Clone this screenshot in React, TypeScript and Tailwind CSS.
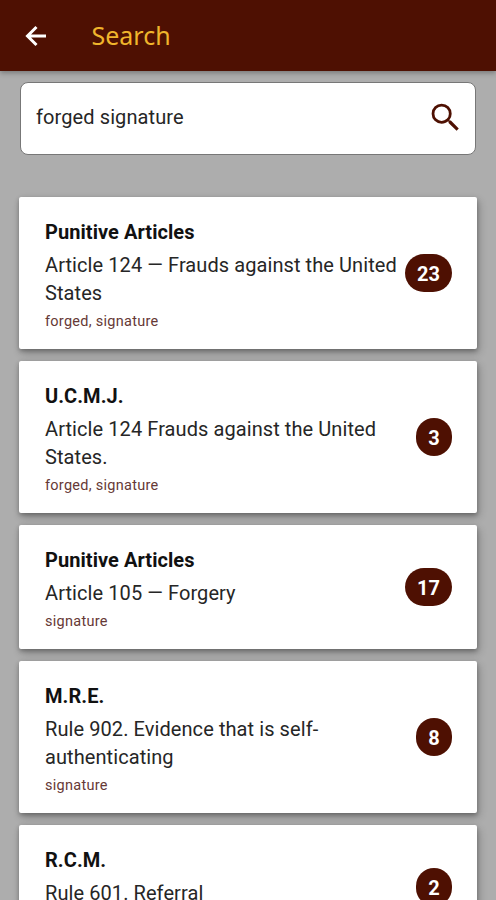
type Item = { cat: string; lines: string[]; terms?: string; count: number };

const items: Item[] = [
  { cat: 'Punitive Articles', lines: ['Article 124 — Frauds against the United', 'States'], terms: 'forged, signature', count: 23 },
  { cat: 'U.C.M.J.', lines: ['Article 124 Frauds against the United', 'States.'], terms: 'forged, signature', count: 3 },
  { cat: 'Punitive Articles', lines: ['Article 105 — Forgery'], terms: 'signature', count: 17 },
  { cat: 'M.R.E.', lines: ['Rule 902. Evidence that is self-', 'authenticating'], terms: 'signature', count: 8 },
  { cat: 'R.C.M.', lines: ['Rule 601. Referral'], count: 2 },
];

function Card({ item }: { item: Item }) {
  return (
    <article className="flex items-center justify-between rounded-[2px] bg-white pt-[21px] pr-[25px] pb-[18px] pl-[26px] shadow-[0_2px_4px_rgba(0,0,0,0.25),2px_4px_9px_rgba(0,0,0,0.24)]">
      <div className="whitespace-nowrap">
        <h2 className="h-[28px] text-[20px] leading-[28px] font-bold tracking-[0.06px] text-[#111]">{item.cat}</h2>
        <div className="mt-[5px] text-[20px] leading-[28px] tracking-[0.08px] text-[#262626]">
          {item.lines.map((l) => <p key={l}>{l}</p>)}
        </div>
        <p className="mt-[5px] h-[19px] text-[14.5px] leading-[19px] tracking-[0.28px] text-[#663936]">{item.terms}</p>
      </div>
      <span className="-ml-4 mb-[3px] flex h-[38px] min-w-[36px] shrink-0 items-center justify-center rounded-[19px] bg-[#4e1002] px-[12px] pt-[2px] text-[20px] font-bold text-white">{item.count}</span>
    </article>
  );
}

export default function App() {
  return (
    <main className="flex h-[900px] w-[496px] flex-col overflow-hidden bg-[#adadad] font-[Roboto,sans-serif]">
      <header className="flex h-[71px] shrink-0 items-center bg-[#4e1002] pl-[21px] shadow-[0_2px_5px_rgba(0,0,0,0.3)]">
        <svg width="30" height="30" viewBox="0 0 24 24" fill="none" stroke="#fff" strokeWidth="2.4"><path d="M20 12H5.8M12.4 4.8 5.2 12l7.2 7.2" /></svg>
        <h1 className="mt-px ml-[40.5px] font-['Noto_Sans',sans-serif] text-[25px] text-[#f0b52c]">Search</h1>
      </header>
      <div className="mx-[20px] mt-[11px] flex h-[73px] shrink-0 items-center justify-between rounded-lg border border-[#777] bg-white pr-[11px] pl-[15px]">
        <span className="mb-[3px] text-[20px] tracking-[0.1px] text-[#262626]">forged signature</span>
        <svg className="mb-[2px]" width="37" height="37" viewBox="0 0 24 24" fill="#4e1002"><path d="M15.5 14h-.79l-.28-.27A6.47 6.47 0 0 0 16 9.5 6.5 6.5 0 1 0 9.5 16c1.61 0 3.09-.59 4.23-1.57l.27.28v.79l5.2 5.1 1.4-1.4zm-6 .2A4.7 4.7 0 1 1 9.5 4.8a4.7 4.7 0 0 1 0 9.4z" /></svg>
      </div>
      <section className="mx-[19px] mt-[42px] flex shrink-0 flex-col gap-3">
        {items.map((item, i) => <Card key={i} item={item} />)}
      </section>
    </main>
  );
}
